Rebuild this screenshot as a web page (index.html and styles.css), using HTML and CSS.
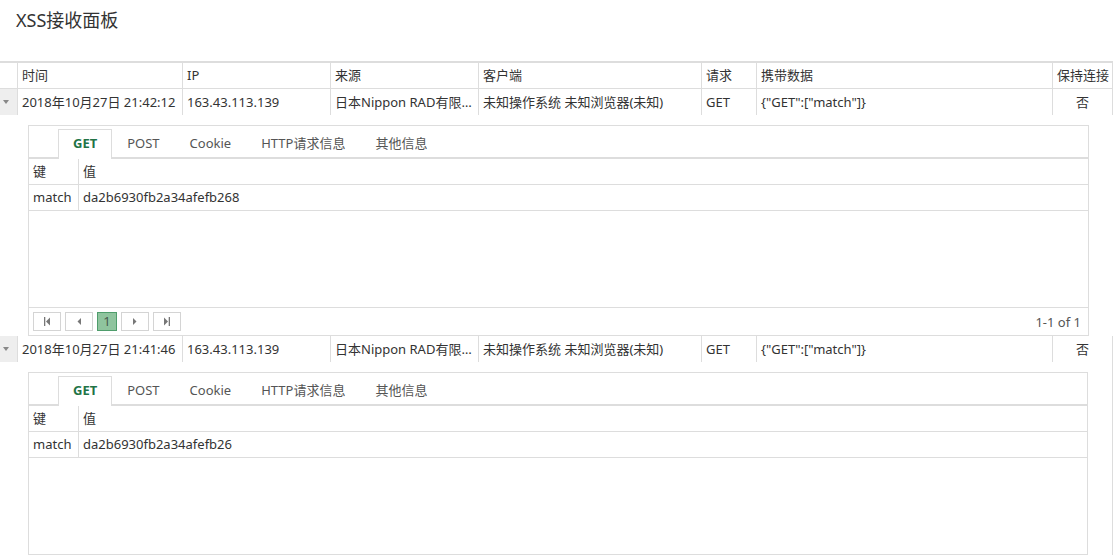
FILE: index.html
```html
<!DOCTYPE html>
<html lang="zh-CN">
<head>
<meta charset="utf-8">
<title>XSS接收面板</title>
<link rel="stylesheet" href="styles.css">
</head>
<body>
<h1 class="title">XSS接收面板</h1>
<div class="grid">
  <div class="row head">
    <div class="cell exp"></div>
    <div class="cell">时间</div>
    <div class="cell">IP</div>
    <div class="cell">来源</div>
    <div class="cell">客户端</div>
    <div class="cell">请求</div>
    <div class="cell">携带数据</div>
    <div class="cell">保持连接</div>
  </div>

  <div class="row data">
    <div class="cell exp"><span class="tri"></span></div>
    <div class="cell">2018年10月27日 21:42:12</div>
    <div class="cell">163.43.113.139</div>
    <div class="cell">日本Nippon RAD有限公司</div>
    <div class="cell">未知操作系统 未知浏览器(未知)</div>
    <div class="cell">GET</div>
    <div class="cell">{"GET":["match"]}</div>
    <div class="cell center">否</div>
  </div>
  <div class="detail">
    <div class="panel">
      <div class="tabs">
        <span class="tab active">GET</span>
        <span class="tab">POST</span>
        <span class="tab">Cookie</span>
        <span class="tab">HTTP请求信息</span>
        <span class="tab">其他信息</span>
      </div>
      <div class="kv-row kv-head"><div class="k">键</div><div class="v">值</div></div>
      <div class="kv-row"><div class="k">match</div><div class="v">da2b6930fb2a34afefb268</div></div>
      <div class="kv-empty"></div>
      <div class="pager">
        <span class="pbtn"><svg width="6" height="9" viewBox="0 0 6 9"><rect x="0" y="0" width="1.3" height="9" fill="#777"/><polygon points="6,0.5 2,4.5 6,8.5" fill="#777"/></svg></span>
        <span class="pbtn"><svg width="4" height="7" viewBox="0 0 4 7"><polygon points="4,0 0.5,3.5 4,7" fill="#777"/></svg></span>
        <span class="pbtn current">1</span>
        <span class="pbtn"><svg width="4" height="7" viewBox="0 0 4 7"><polygon points="0,0 3.5,3.5 0,7" fill="#777"/></svg></span>
        <span class="pbtn"><svg width="6" height="9" viewBox="0 0 6 9"><polygon points="0,0.5 4,4.5 0,8.5" fill="#777"/><rect x="4.7" y="0" width="1.3" height="9" fill="#777"/></svg></span>
        <span class="pinfo">1-1 of 1</span>
      </div>
    </div>
  </div>

  <div class="row data">
    <div class="cell exp"><span class="tri"></span></div>
    <div class="cell">2018年10月27日 21:41:46</div>
    <div class="cell">163.43.113.139</div>
    <div class="cell">日本Nippon RAD有限公司</div>
    <div class="cell">未知操作系统 未知浏览器(未知)</div>
    <div class="cell">GET</div>
    <div class="cell">{"GET":["match"]}</div>
    <div class="cell center">否</div>
  </div>
  <div class="detail last">
    <div class="panel">
      <div class="tabs">
        <span class="tab active">GET</span>
        <span class="tab">POST</span>
        <span class="tab">Cookie</span>
        <span class="tab">HTTP请求信息</span>
        <span class="tab">其他信息</span>
      </div>
      <div class="kv-row kv-head"><div class="k">键</div><div class="v">值</div></div>
      <div class="kv-row"><div class="k">match</div><div class="v">da2b6930fb2a34afefb26</div></div>
      <div class="kv-empty"></div>
    </div>
  </div>
</div>
</body>
</html>
```
FILE: styles.css
```css
* { box-sizing: border-box; }
html, body { overflow: hidden; }
body {
  margin: 0;
  font-family: "Noto Sans", "Noto Sans CJK SC", "Microsoft YaHei", sans-serif;
  font-size: 13px;
  color: #333;
  background: #fff;
}
.title {
  margin: 0;
  padding: 7px 16px 0;
  height: 61px;
  font-size: 18px;
  font-weight: normal;
  line-height: 26px;
  color: #333;
}
.grid { width: 1113px; }
.row {
  display: grid;
  grid-template-columns: 18px 165px 148px 148px 223px 55px 296px 60px;
  height: 26px;
}
.head {
  height: 28px;
  border-top: 2px solid #ddd;
  border-bottom: 1px solid #ddd;
}
.cell {
  padding: 0 2px 0 4px;
  border-right: 1px solid #ddd;
  line-height: 25px;
  white-space: nowrap;
  overflow: hidden;
  text-overflow: ellipsis;
}
.data .cell { line-height: 26px; }
.cell.center { text-align: center; padding: 0; }
.cell.exp { padding: 0; }
.data .exp {
  background: #eee;
  display: flex;
  align-items: center;
  padding-left: 3px;
}
.tri {
  width: 0;
  height: 0;
  border-left: 3px solid transparent;
  border-right: 3px solid transparent;
  border-top: 4px solid #888;
}
.detail { padding: 10px 24px 0 28px; }
.detail.last { border-right: 1px solid #ddd; }
.panel { border: 1px solid #ddd; }
.tabs {
  display: flex;
  align-items: flex-end;
  height: 33px;
  padding: 3px 0 0 29px;
  border-bottom: 2px solid #ddd;
}
.tab {
  height: 30px;
  margin-bottom: -2px;
  padding: 0 14px;
  border: 1px solid transparent;
  border-bottom: 0;
  line-height: 27px;
  color: #555;
}
.tab.active {
  border-color: #ddd;
  background: #fff;
  color: #217346;
  font-weight: bold;
}
.kv-row {
  display: grid;
  grid-template-columns: 50px 1fr;
  height: 26px;
  border-bottom: 1px solid #ddd;
}
.kv-row > div {
  padding: 0 4px;
  line-height: 25px;
  white-space: nowrap;
}
.kv-row .k { border-right: 1px solid #ddd; }
.kv-empty { height: 96px; }
.pager {
  display: flex;
  align-items: center;
  height: 28px;
  padding: 0 7px 0 4px;
  border-top: 1px solid #ddd;
}
.pbtn {
  display: flex;
  align-items: center;
  justify-content: center;
  width: 28px;
  height: 19px;
  margin-right: 4px;
  border: 1px solid #d4d4d4;
  background: #fff;
}
.pbtn.current {
  width: 20px;
  background: #8fc49e;
  border-color: #4f9d6c;
  color: #4a5a50;
  font-size: 13px;
  line-height: 17px;
}
.pinfo {
  margin-left: auto;
  color: #555;
}
```
